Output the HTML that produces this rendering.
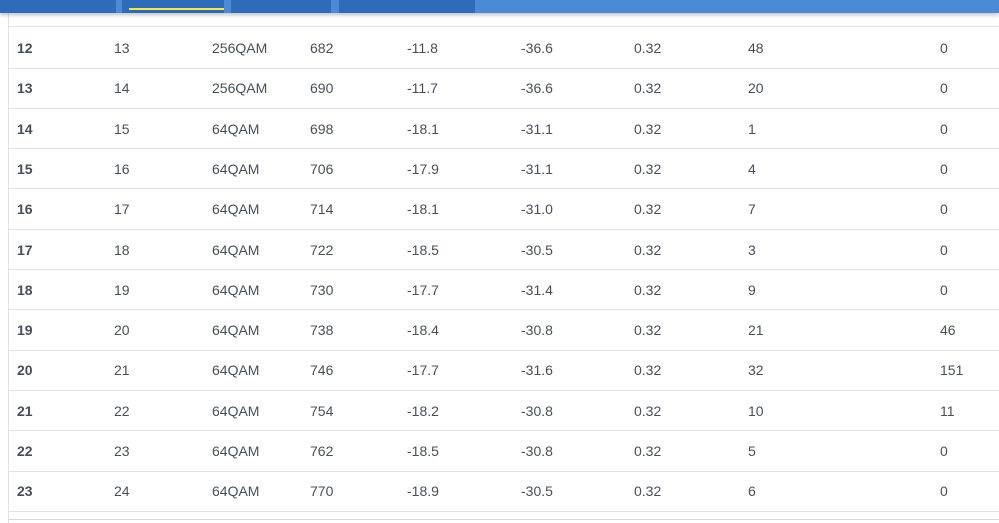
<!DOCTYPE html><html><head><style>
body{margin:0;width:999px;height:523px;overflow:hidden;background:#fff;font-family:"Liberation Sans",sans-serif;font-size:14px;color:#4a4f57;position:relative}
.top{position:absolute;left:0;top:0;width:999px;height:13px;background:#4a8ad6;box-shadow:0 2px 4px rgba(0,0,0,.25);z-index:2}
.tab{position:absolute;top:0;height:13px;background:#2e6bbb}
.vl{position:absolute;left:8px;top:13px;width:1px;height:510px;background:#e3e3e3}
.hl{position:absolute;left:9px;width:990px;height:1px;background:#e3e3e3}
.row{position:absolute;left:0;width:999px;height:20px;line-height:20px}
.row span{position:absolute}
.row span:first-child{font-weight:bold}
</style></head><body>
<div class="top">
<div class="tab" style="left:0;width:116px"></div>
<div class="tab" style="left:122px;width:102px"><div style="position:absolute;left:7px;top:8px;width:95px;height:2px;background:#f2e843"></div></div>
<div class="tab" style="left:231px;width:100px"></div>
<div class="tab" style="left:339px;width:136px"></div>
</div>
<div class="vl"></div>
<div class="hl" style="top:26px"></div>
<div id="rows"></div>
<div class="hl" style="top:519px;background:#d8d8d8"></div>
<script>
var d=[[12,13,"256QAM",682,"-11.8","-36.6","0.32",48,0],[13,14,"256QAM",690,"-11.7","-36.6","0.32",20,0],[14,15,"64QAM",698,"-18.1","-31.1","0.32",1,0],[15,16,"64QAM",706,"-17.9","-31.1","0.32",4,0],[16,17,"64QAM",714,"-18.1","-31.0","0.32",7,0],[17,18,"64QAM",722,"-18.5","-30.5","0.32",3,0],[18,19,"64QAM",730,"-17.7","-31.4","0.32",9,0],[19,20,"64QAM",738,"-18.4","-30.8","0.32",21,46],[20,21,"64QAM",746,"-17.7","-31.6","0.32",32,151],[21,22,"64QAM",754,"-18.2","-30.8","0.32",10,11],[22,23,"64QAM",762,"-18.5","-30.8","0.32",5,0],[23,24,"64QAM",770,"-18.9","-30.5","0.32",6,0]];
var xs=[17,114,212,310,407,521,634,748,940],h="";
d.forEach(function(r,i){var c=48+i*40.3;h+='<div class="row" style="top:'+(c-10)+'px">';r.forEach(function(v,j){h+='<span style="left:'+xs[j]+'px">'+v+'</span>'});h+='</div><div class="hl" style="top:'+Math.round(c+19.5)+'px"></div>'});
document.getElementById("rows").innerHTML=h;
</script>
</body></html>
